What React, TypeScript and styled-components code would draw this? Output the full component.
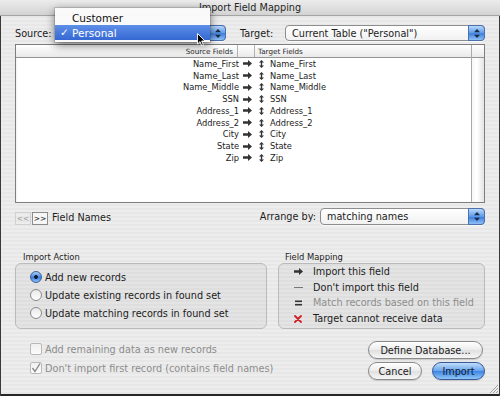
import styled, { createGlobalStyle } from "styled-components";

const GlobalStyle = createGlobalStyle`
  html, body {
    margin: 0;
    padding: 0;
    background: #2a2a2a;
  }
  body {
    font-family: "DejaVu Sans", "Liberation Sans", sans-serif;
  }
`;

const FIELDS = [
  "Name_First",
  "Name_Last",
  "Name_Middle",
  "SSN",
  "Address_1",
  "Address_2",
  "City",
  "State",
  "Zip",
];

const ACTIONS = [
  { label: "Add new records", on: true },
  { label: "Update existing records in found set", on: false },
  { label: "Update matching records in found set", on: false },
];

function Stepper() {
  return (
    <StepperBox>
      <svg width="6" height="9" viewBox="0 0 6 9">
        <path d="M3 0 L6 3.2 L0 3.2 Z M3 9 L6 5.8 L0 5.8 Z" fill="#1b2a45" />
      </svg>
    </StepperBox>
  );
}

function MapArrow() {
  return (
    <svg width="9" height="7" viewBox="0 0 9 7">
      <path d="M0 2.2 H5 V0 L9 3.5 L5 7 V4.8 H0 Z" fill="#333" />
    </svg>
  );
}

function Handle() {
  return (
    <svg width="5" height="8" viewBox="0 0 5 8">
      <path d="M2.5 0 L5 2.6 H0 Z M2.5 8 L5 5.4 H0 Z M1.8 2.4 H3.2 V5.6 H1.8 Z" fill="#333" />
    </svg>
  );
}

function Legend({ kind }: { kind: string }) {
  if (kind === "arrow") return <MapArrow />;
  if (kind === "dash")
    return (
      <svg width="9" height="3" viewBox="0 0 9 3">
        <rect x="0" y="1" width="9" height="1" fill="#777" />
      </svg>
    );
  if (kind === "equal")
    return (
      <svg width="7" height="6" viewBox="0 0 7 6">
        <rect x="0" y="0.5" width="7" height="1.6" fill="#333" />
        <rect x="0" y="3.9" width="7" height="1.6" fill="#333" />
      </svg>
    );
  return (
    <svg width="8" height="8" viewBox="0 0 8 8">
      <path d="M1 1 L7 7 M7 1 L1 7" stroke="#d0202a" strokeWidth="1.8" strokeLinecap="round" />
    </svg>
  );
}

const MAPPING = [
  { kind: "arrow", label: "Import this field", dim: false },
  { kind: "dash", label: "Don't import this field", dim: false },
  { kind: "equal", label: "Match records based on this field", dim: true },
  { kind: "x", label: "Target cannot receive data", dim: false },
];

export default function App() {
  return (
    <>
      <GlobalStyle />
      <Window>
        <TitleBar>Import Field Mapping</TitleBar>
        <Body>
          <TopRow>
            <Label $w={41}>Source:</Label>
            {/* the open menu covers this popup's text */}
            <PopupButton $w={170}>
              <PopupText />
              <Stepper />
            </PopupButton>
            <Label $w={45} style={{ marginLeft: 14 }}>
              Target:
            </Label>
            <PopupButton $w={200}>
              <PopupText>Current Table ("Personal")</PopupText>
              <Stepper />
            </PopupButton>
          </TopRow>

          <ListBox>
            <ListMain>
              <ListHeader>
                <HeaderCell $align="right">Source Fields</HeaderCell>
                <HeaderCell $align="left" />
                <HeaderCell $align="left" $last>
                  Target Fields
                </HeaderCell>
              </ListHeader>
              {FIELDS.map((f) => (
                <FieldRow key={f}>
                  <SourceName>{f}</SourceName>
                  <IconCell>
                    <MapArrow />
                  </IconCell>
                  <IconCell>
                    <Handle />
                  </IconCell>
                  <TargetName>{f}</TargetName>
                </FieldRow>
              ))}
            </ListMain>
            <ScrollCol>
              <ScrollCorner />
              <ScrollTrack />
            </ScrollCol>
          </ListBox>

          <UnderRow>
            <NavButton $active={false}>&lt;&lt;</NavButton>
            <NavButton $active>&gt;&gt;</NavButton>
            <FieldNames>Field Names</FieldNames>
            <ArrangeLabel>Arrange by:</ArrangeLabel>
            <PopupButton $w={165} $h={17}>
              <PopupText>matching names</PopupText>
              <Stepper />
            </PopupButton>
          </UnderRow>

          <GroupsRow>
            <Group $w={252}>
              <GroupLabel $indent={8}>Import Action</GroupLabel>
              <GroupBox>
                <RadioList>
                  {ACTIONS.map((a) => (
                    <OptionRow key={a.label}>
                      <Radio $on={a.on} />
                      {a.label}
                    </OptionRow>
                  ))}
                </RadioList>
              </GroupBox>
            </Group>
            <Group $w={207}>
              <GroupLabel $indent={7}>Field Mapping</GroupLabel>
              <GroupBox>
                {MAPPING.map((m) => (
                  <LegendRow key={m.label} $dim={m.dim}>
                    <LegendIcon>
                      <Legend kind={m.kind} />
                    </LegendIcon>
                    {m.label}
                  </LegendRow>
                ))}
              </GroupBox>
            </Group>
          </GroupsRow>

          <BottomArea>
            <Checks>
              <CheckRow>
                <CheckBox />
                Add remaining data as new records
              </CheckRow>
              <CheckRow>
                <CheckBox>
                  <svg width="10" height="10" viewBox="0 0 10 10">
                    <path d="M1.5 5 L4 8.5 L9 0.5" stroke="#8a8a8a" strokeWidth="1.4" fill="none" />
                  </svg>
                </CheckBox>
                Don't import first record (contains field names)
              </CheckRow>
            </Checks>
            <Buttons>
              <PillButton $w={115}>Define Database...</PillButton>
              <ButtonPair>
                <PillButton $w={54}>Cancel</PillButton>
                <PillButton $w={53} $primary>
                  Import
                </PillButton>
              </ButtonPair>
            </Buttons>
          </BottomArea>
        </Body>

        <Menu>
          <MenuItem $selected={false}>Customer</MenuItem>
          <MenuItem $selected>
            <MenuCheck>✓</MenuCheck>
            Personal
          </MenuItem>
        </Menu>

        <Cursor width="9" height="14" viewBox="0 0 9 14">
          <path d="M0.5 0.5 L0.5 11 L3 8.6 L4.8 13 L6.4 12.3 L4.7 8 L8 8 Z" fill="#000" stroke="#fff" strokeWidth="0.9" />
        </Cursor>

        <Grip width="9" height="9" viewBox="0 0 9 9">
          <path d="M9 1 L1 9 M9 4 L4 9 M9 7 L7 9" stroke="#9a9a9a" strokeWidth="0.9" />
        </Grip>
      </Window>
    </>
  );
}

const Window = styled.div`
  position: relative;
  width: 500px;
  height: 396px;
  box-sizing: border-box;
  overflow: hidden;
  color: #1c1c1c;
  font-size: 9.7px;
  background: repeating-linear-gradient(
    0deg,
    #ededed 0px,
    #ededed 2px,
    #e7e7e7 2px,
    #e7e7e7 4px
  );
  box-shadow: inset 1px 0 0 #3a3a3a, inset -1px 0 0 #3a3a3a,
    inset 0 -2px 0 #262626;
`;

const TitleBar = styled.div`
  height: 15px;
  border-bottom: 1px solid #a4a4a4;
  background: linear-gradient(#ececec, #d3d3d3);
  display: flex;
  align-items: center;
  justify-content: center;
  color: #262626;
`;

const Body = styled.div`
  padding: 9px 15px 0;
  display: flex;
  flex-direction: column;
`;

const TopRow = styled.div`
  display: flex;
  align-items: center;
  height: 16px;
`;

const Label = styled.span<{ $w: number }>`
  width: ${(p) => p.$w}px;
  flex: none;
  white-space: nowrap;
`;

const PopupButton = styled.div<{ $w: number; $h?: number }>`
  width: ${(p) => p.$w}px;
  height: ${(p) => p.$h ?? 16}px;
  flex: none;
  box-sizing: border-box;
  display: flex;
  align-items: stretch;
  border: 1px solid #8d8d8d;
  border-radius: 4px;
  background: linear-gradient(#ffffff, #f1f1f1);
  box-shadow: 0 1px 0 rgba(255, 255, 255, 0.7);
`;

const PopupText = styled.span`
  flex: 1;
  padding-left: 6px;
  display: flex;
  align-items: center;
  white-space: nowrap;
  overflow: hidden;
`;

const StepperBox = styled.span`
  width: 15px;
  margin: -1px -1px -1px 0;
  display: flex;
  align-items: center;
  justify-content: center;
  border: 1px solid #4a70b0;
  border-radius: 0 4px 4px 0;
  background: linear-gradient(#b8d8fa, #5d9ae9 50%, #3f7fdc 55%, #8fc0f5);
`;

const ListBox = styled.div`
  margin-top: 3px;
  height: 159px;
  box-sizing: border-box;
  display: flex;
  border: 1px solid #7e7e7e;
  background: #fff;
  box-shadow: inset 0 1px 2px rgba(0, 0, 0, 0.15);
`;

const ListMain = styled.div`
  flex: 1;
  display: flex;
  flex-direction: column;
`;

const ListHeader = styled.div`
  height: 12px;
  display: grid;
  grid-template-columns: 222px 17px 1fr;
  border-bottom: 1px solid #939393;
  background: linear-gradient(#ffffff, #e9e9e9);
  font-size: 7.2px;
`;

const HeaderCell = styled.div<{ $align: string; $last?: boolean }>`
  display: flex;
  align-items: center;
  justify-content: ${(p) => (p.$align === "right" ? "flex-end" : "flex-start")};
  padding: ${(p) => (p.$align === "right" ? "0 4px 0 0" : "0 0 0 3px")};
  border-right: ${(p) => (p.$last ? "none" : "1px solid #b2b2b2")};
  color: #2a2a2a;
`;

const FieldRow = styled.div`
  height: 11.75px;
  display: grid;
  grid-template-columns: 224px 14px 14px 1fr;
  align-items: center;
  font-size: 8.3px;
`;

const SourceName = styled.span`
  text-align: right;
  padding-right: 1px;
`;

const IconCell = styled.span`
  display: flex;
  align-items: center;
  justify-content: center;
`;

const TargetName = styled.span`
  padding-left: 2px;
`;

const ScrollCol = styled.div`
  width: 12px;
  display: flex;
  flex-direction: column;
  border-left: 1px solid #a9a9a9;
`;

const ScrollCorner = styled.div`
  height: 12px;
  border-bottom: 1px solid #939393;
  background: linear-gradient(#ffffff, #e9e9e9);
`;

const ScrollTrack = styled.div`
  flex: 1;
  background: linear-gradient(90deg, #f7f7f7, #ffffff 40%, #e4e4e4);
`;

const UnderRow = styled.div`
  margin-top: 5px;
  height: 17px;
  display: flex;
  align-items: center;
`;

const NavButton = styled.span<{ $active: boolean }>`
  width: 16px;
  height: 13px;
  margin-top: 3px;
  margin-right: 1px;
  box-sizing: border-box;
  display: flex;
  align-items: center;
  justify-content: center;
  font-size: 7.5px;
  color: ${(p) => (p.$active ? "#222" : "#9a9a9a")};
  border: 1px solid ${(p) => (p.$active ? "#8c8c8c" : "#d0d0d0")};
  background: ${(p) => (p.$active ? "#f6f6f6" : "transparent")};
`;

const FieldNames = styled.span`
  margin-left: 3px;
  margin-top: 2px;
`;

const ArrangeLabel = styled.span`
  margin-left: auto;
  margin-right: 4px;
`;

const GroupsRow = styled.div`
  margin-top: 27px;
  display: flex;
  gap: 11px;
`;

const Group = styled.div<{ $w: number }>`
  width: ${(p) => p.$w}px;
  display: flex;
  flex-direction: column;
`;

const GroupLabel = styled.div<{ $indent: number }>`
  height: 10px;
  line-height: 10px;
  margin-bottom: 1px;
  padding-left: ${(p) => p.$indent}px;
  font-size: 8.4px;
`;

const GroupBox = styled.div`
  height: 66px;
  box-sizing: border-box;
  border: 1px solid #bababa;
  border-radius: 6px;
  background: rgba(0, 0, 0, 0.035);
`;

const RadioList = styled.div`
  padding: 4px 0 0 14px;
`;

const OptionRow = styled.div`
  height: 18px;
  display: flex;
  align-items: center;
  gap: 3px;
  white-space: nowrap;
`;

const Radio = styled.span<{ $on: boolean }>`
  width: 12px;
  height: 12px;
  box-sizing: border-box;
  border-radius: 50%;
  flex: none;
  border: 1px solid ${(p) => (p.$on ? "#3a5f9c" : "#8a8a8a")};
  background: ${(p) =>
    p.$on
      ? "radial-gradient(circle at 50% 50%, #10203a 0 1.7px, transparent 2.2px), linear-gradient(#a9d0f7, #3f80de 55%, #8cc0f5)"
      : "linear-gradient(#e8e8e8, #ffffff)"};
`;

const LegendRow = styled.div<{ $dim: boolean }>`
  height: 15.6px;
  display: flex;
  align-items: center;
  padding-left: 10px;
  white-space: nowrap;
  color: ${(p) => (p.$dim ? "#8e8e8e" : "#1c1c1c")};
`;

const LegendIcon = styled.span`
  width: 18px;
  margin-right: 6px;
  display: flex;
  justify-content: center;
  align-items: center;
`;

const BottomArea = styled.div`
  margin-top: 12px;
  display: flex;
  justify-content: space-between;
`;

const Checks = styled.div`
  margin-top: -1.5px;
  padding-left: 15px;
  display: flex;
  flex-direction: column;
`;

const CheckRow = styled.div`
  height: 19px;
  display: flex;
  align-items: center;
  gap: 3px;
  color: #8c8c8c;
  white-space: nowrap;
`;

const CheckBox = styled.span`
  width: 12px;
  height: 12px;
  box-sizing: border-box;
  flex: none;
  display: flex;
  align-items: center;
  justify-content: center;
  border: 1px solid #b9b9b9;
  border-radius: 2px;
  background: linear-gradient(#f0f0f0, #fbfbfb);
`;

const Buttons = styled.div`
  width: 117px;
  display: flex;
  flex-direction: column;
  gap: 3px;
`;

const ButtonPair = styled.div`
  display: flex;
  justify-content: space-between;
`;

const PillButton = styled.div<{ $w: number; $primary?: boolean }>`
  width: ${(p) => p.$w}px;
  height: 18px;
  box-sizing: border-box;
  display: flex;
  align-items: center;
  justify-content: center;
  border-radius: 9px;
  white-space: nowrap;
  color: ${(p) => (p.$primary ? "#0e1a33" : "#1c1c1c")};
  border: 1px solid ${(p) => (p.$primary ? "#36599a" : "#8a8a8a")};
  background: ${(p) =>
    p.$primary
      ? "linear-gradient(#c2defa, #6aa5ed 48%, #3f85e2 52%, #8fc6f7)"
      : "linear-gradient(#ffffff, #ececec 48%, #e0e0e0 52%, #f6f6f6)"};
  box-shadow: 0 1px 1px rgba(0, 0, 0, 0.15);
`;

const Menu = styled.div`
  position: absolute;
  left: 55px;
  top: 8px;
  width: 155px;
  padding: 2px 0;
  background: rgba(250, 250, 250, 0.98);
  box-shadow: 0 3px 9px rgba(0, 0, 0, 0.55), 0 0 0 1px rgba(0, 0, 0, 0.12);
  font-size: 10.5px;
`;

const MenuItem = styled.div<{ $selected: boolean }>`
  position: relative;
  height: 15px;
  display: flex;
  align-items: center;
  padding-left: 17px;
  color: ${(p) => (p.$selected ? "#fff" : "#111")};
  background: ${(p) =>
    p.$selected ? "linear-gradient(#5e8fe8, #3568d3)" : "transparent"};
`;

const MenuCheck = styled.span`
  position: absolute;
  left: 5px;
  top: 0;
  line-height: 15px;
`;

const Cursor = styled.svg`
  position: absolute;
  left: 197px;
  top: 33px;
`;

const Grip = styled.svg`
  position: absolute;
  right: 2px;
  bottom: 3px;
`;
